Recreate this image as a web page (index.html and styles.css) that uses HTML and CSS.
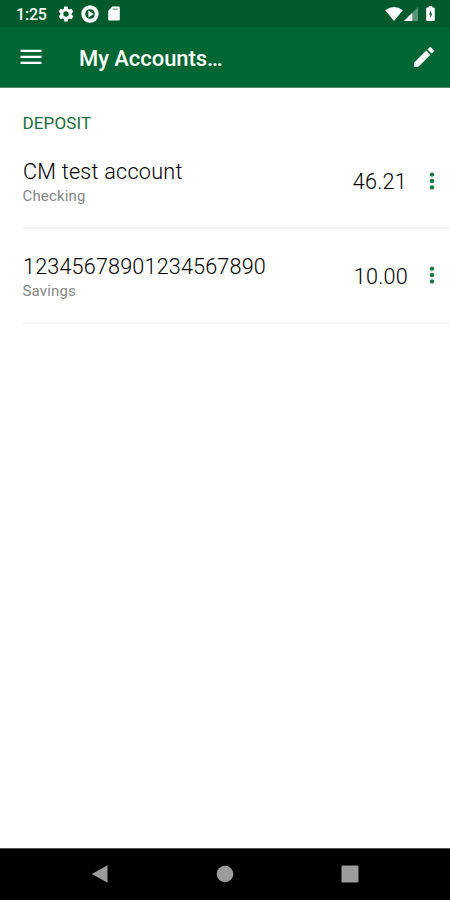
FILE: index.html
```
<!DOCTYPE html>
<html lang="en">
<head>
<meta charset="utf-8">
<title>My Accounts</title>
<link rel="stylesheet" href="styles.css">
</head>
<body>
<div class="screen">
  <div class="status">
    <span class="clock">1:25</span>
    <svg class="gear" width="18" height="18" viewBox="0 0 24 24"><path d="M19.4 13c0-.3.1-.6.1-1s0-.7-.1-1l2.100-1.600c.2-.2.2-.4.1-.6l-2-3.500c-.1-.2-.4-.3-.6-.2l-2.500 1c-.5-.4-1.100-.7-1.700-1l-.4-2.600c0-.2-.2-.5-.4-.5h-4c-.3 0-.5.2-.5.5l-.4 2.600c-.6.200-1.200.6-1.700 1l-2.500-1c-.2-.1-.5 0-.6.2l-2 3.500c-.1.200-.1.500.1.600L4.600 11a8 8 0 0 0 0 2l-2.100 1.600c-.2.200-.2.400-.1.600l2 3.500c.1.200.4.300.6.200l2.500-1c.5.400 1.100.7 1.700 1l.4 2.600c0 .3.200.5.500.5h4c.2 0 .4-.2.400-.5l.4-2.600c.6-.2 1.200-.6 1.700-1l2.500 1c.2.100.5 0 .6-.2l2-3.500c.1-.2.100-.5-.1-.6zM12 15.600a3.600 3.600 0 1 1 0-7.200 3.600 3.600 0 0 1 0 7.200z"/></svg>
    <svg class="play" width="18" height="18" viewBox="0 0 18 18"><circle cx="9" cy="9" r="8.700"/><circle class="cut" cx="9" cy="9" r="4.800"/><path d="M7.400 5.600v6.800l5.400-3.400z"/></svg>
    <svg class="card" width="12" height="15" viewBox="0 0 12 15"><path d="M4.300.5h6.200q1.300 0 1.300 1.300v11.400q0 1.300-1.300 1.300h-9q-1.300 0-1.300-1.300V4.800z"/><path class="cut faint" d="M4.700 2.500h5v1.300h-5z"/></svg>
    <svg class="wifi" width="18" height="14" viewBox="0 0 18 14"><path d="M.2 3.300Q9-3.200 17.800 3.300L9 14z"/></svg>
    <svg class="signal" width="14" height="14" viewBox="0 0 14 14"><path class="dim" d="M14 0v14H0z"/><path d="M8.300 5.700V14H0z"/></svg>
    <svg class="battery" width="9" height="15" viewBox="0 0 9 15"><path d="M2.700 0h3.600v1.600H8q.8 0 .8.800v11.800q0 .8-.8.800H1q-.8 0-.8-.8V2.400q0-.8.800-.8h1.700z"/><path class="cut" d="M5 4.200 3 8.600h1.300v3.600l2-4.600H5z"/></svg>
  </div>
  <header class="bar">
    <svg class="menu" width="22" height="16" viewBox="0 0 22 16"><path d="M.5.800h21v2.200H.5zM.5 6.700h21v2.200H.5zM.5 12.700h21v2.200H.5z"/></svg>
    <h1 class="title">My Accounts…</h1>
    <svg class="edit" width="22" height="22" viewBox="0 0 22 22"><path d="M1 16.800 13.200 4.600l4.200 4.200L5.200 21H1.800q-.8 0-.8-.8zM14.400 3.400l2-2q.9-.8 1.800 0l2.400 2.400q.8.900 0 1.800l-2 2z"/></svg>
  </header>
  <main class="accounts">
    <h2 class="section">DEPOSIT</h2>
    <div class="row">
      <div class="info"><div class="name words">CM test account</div><div class="kind">Checking</div></div>
      <div class="amount">46.21</div>
      <svg class="more" width="6" height="18" viewBox="0 0 6 18"><circle cx="3" cy="2.600" r="2.200"/><circle cx="3" cy="9" r="2.200"/><circle cx="3" cy="15.400" r="2.200"/></svg>
    </div>
    <div class="row">
      <div class="info"><div class="name">12345678901234567890</div><div class="kind">Savings</div></div>
      <div class="amount second">10.00</div>
      <svg class="more" width="6" height="18" viewBox="0 0 6 18"><circle cx="3" cy="2.600" r="2.200"/><circle cx="3" cy="9" r="2.200"/><circle cx="3" cy="15.400" r="2.200"/></svg>
    </div>
  </main>
  <nav class="nav">
    <svg width="18" height="20" viewBox="0 0 18 20"><path d="M16.500 1.200v17.600L.8 10z"/></svg>
    <svg width="18" height="20" viewBox="0 0 18 20"><circle cx="9" cy="10" r="8.300"/></svg>
    <svg width="18" height="20" viewBox="0 0 18 20"><rect x=".5" y="1.500" width="17" height="17" rx="1.200"/></svg>
  </nav>
</div>
</body>
</html>
```

FILE: styles.css
```
* { box-sizing: border-box; }
body { margin: 0; font-family: Roboto, sans-serif; background: #fff; }
h1, h2 { margin: 0; }
svg { display: block; flex: none; fill: currentColor; }
.screen { height: 900px; display: flex; flex-direction: column; overflow: hidden; }
.status { height: 27px; flex: none; display: flex; align-items: center; padding: 0 15px 0 16px; background: #005a2b; color: #fff; }
.clock { width: 41px; font-size: 16px; font-weight: 500; line-height: 27px; padding-top: 1px; letter-spacing: -.2px; }
.play { margin-left: 6px; }
.card { margin-left: 9px; }
.wifi { margin-left: auto; }
.signal { margin-left: 1px; }
.battery { margin-left: 8px; }
.cut { fill: #005a2b; }
.faint { opacity: .55; }
.dim { opacity: .35; }
.bar { height: 61px; flex: none; display: flex; align-items: center; padding: 0 15px 0 20px; background: #006633; color: #fff; border-bottom: 1px solid #4f8a69; }
.title { margin-left: 37px; flex: 1; font-size: 22px; font-weight: 500; line-height: 28px; padding-top: 3px; letter-spacing: -.05px; }
.accounts { flex: 1; padding-left: 23px; }
.section { margin: 24px 0 0 -.5px; height: 22px; font-size: 17px; line-height: 22px; font-weight: 400; color: #1c6d3b; letter-spacing: .15px; }
.row { height: 95px; display: flex; border-bottom: 2px solid #f5f5f5; }
.info { flex: 1; padding-top: 25px; }
.name { font-size: 21.6px; line-height: 26px; font-weight: 300; color: #000; letter-spacing: .17px; }
.words { letter-spacing: .25px; }
.kind { font-size: 15px; line-height: 20px; margin: 1px 0 0 -.5px; color: #868686; letter-spacing: .15px; }
.amount { font-size: 21.6px; line-height: 26px; padding-top: 35px; font-weight: 300; color: #000; letter-spacing: .25px; }
.amount + .more { margin: 38px 15px 0 22px; color: #147a3a; }
.amount.second + .more { margin: 37px 15px 0 21px; }
.nav { height: 52px; flex: none; display: flex; justify-content: space-between; align-items: center; padding: 0 91px 2px; background: #000; color: #9c9c9c; border-top: 1px solid #555; }
```
